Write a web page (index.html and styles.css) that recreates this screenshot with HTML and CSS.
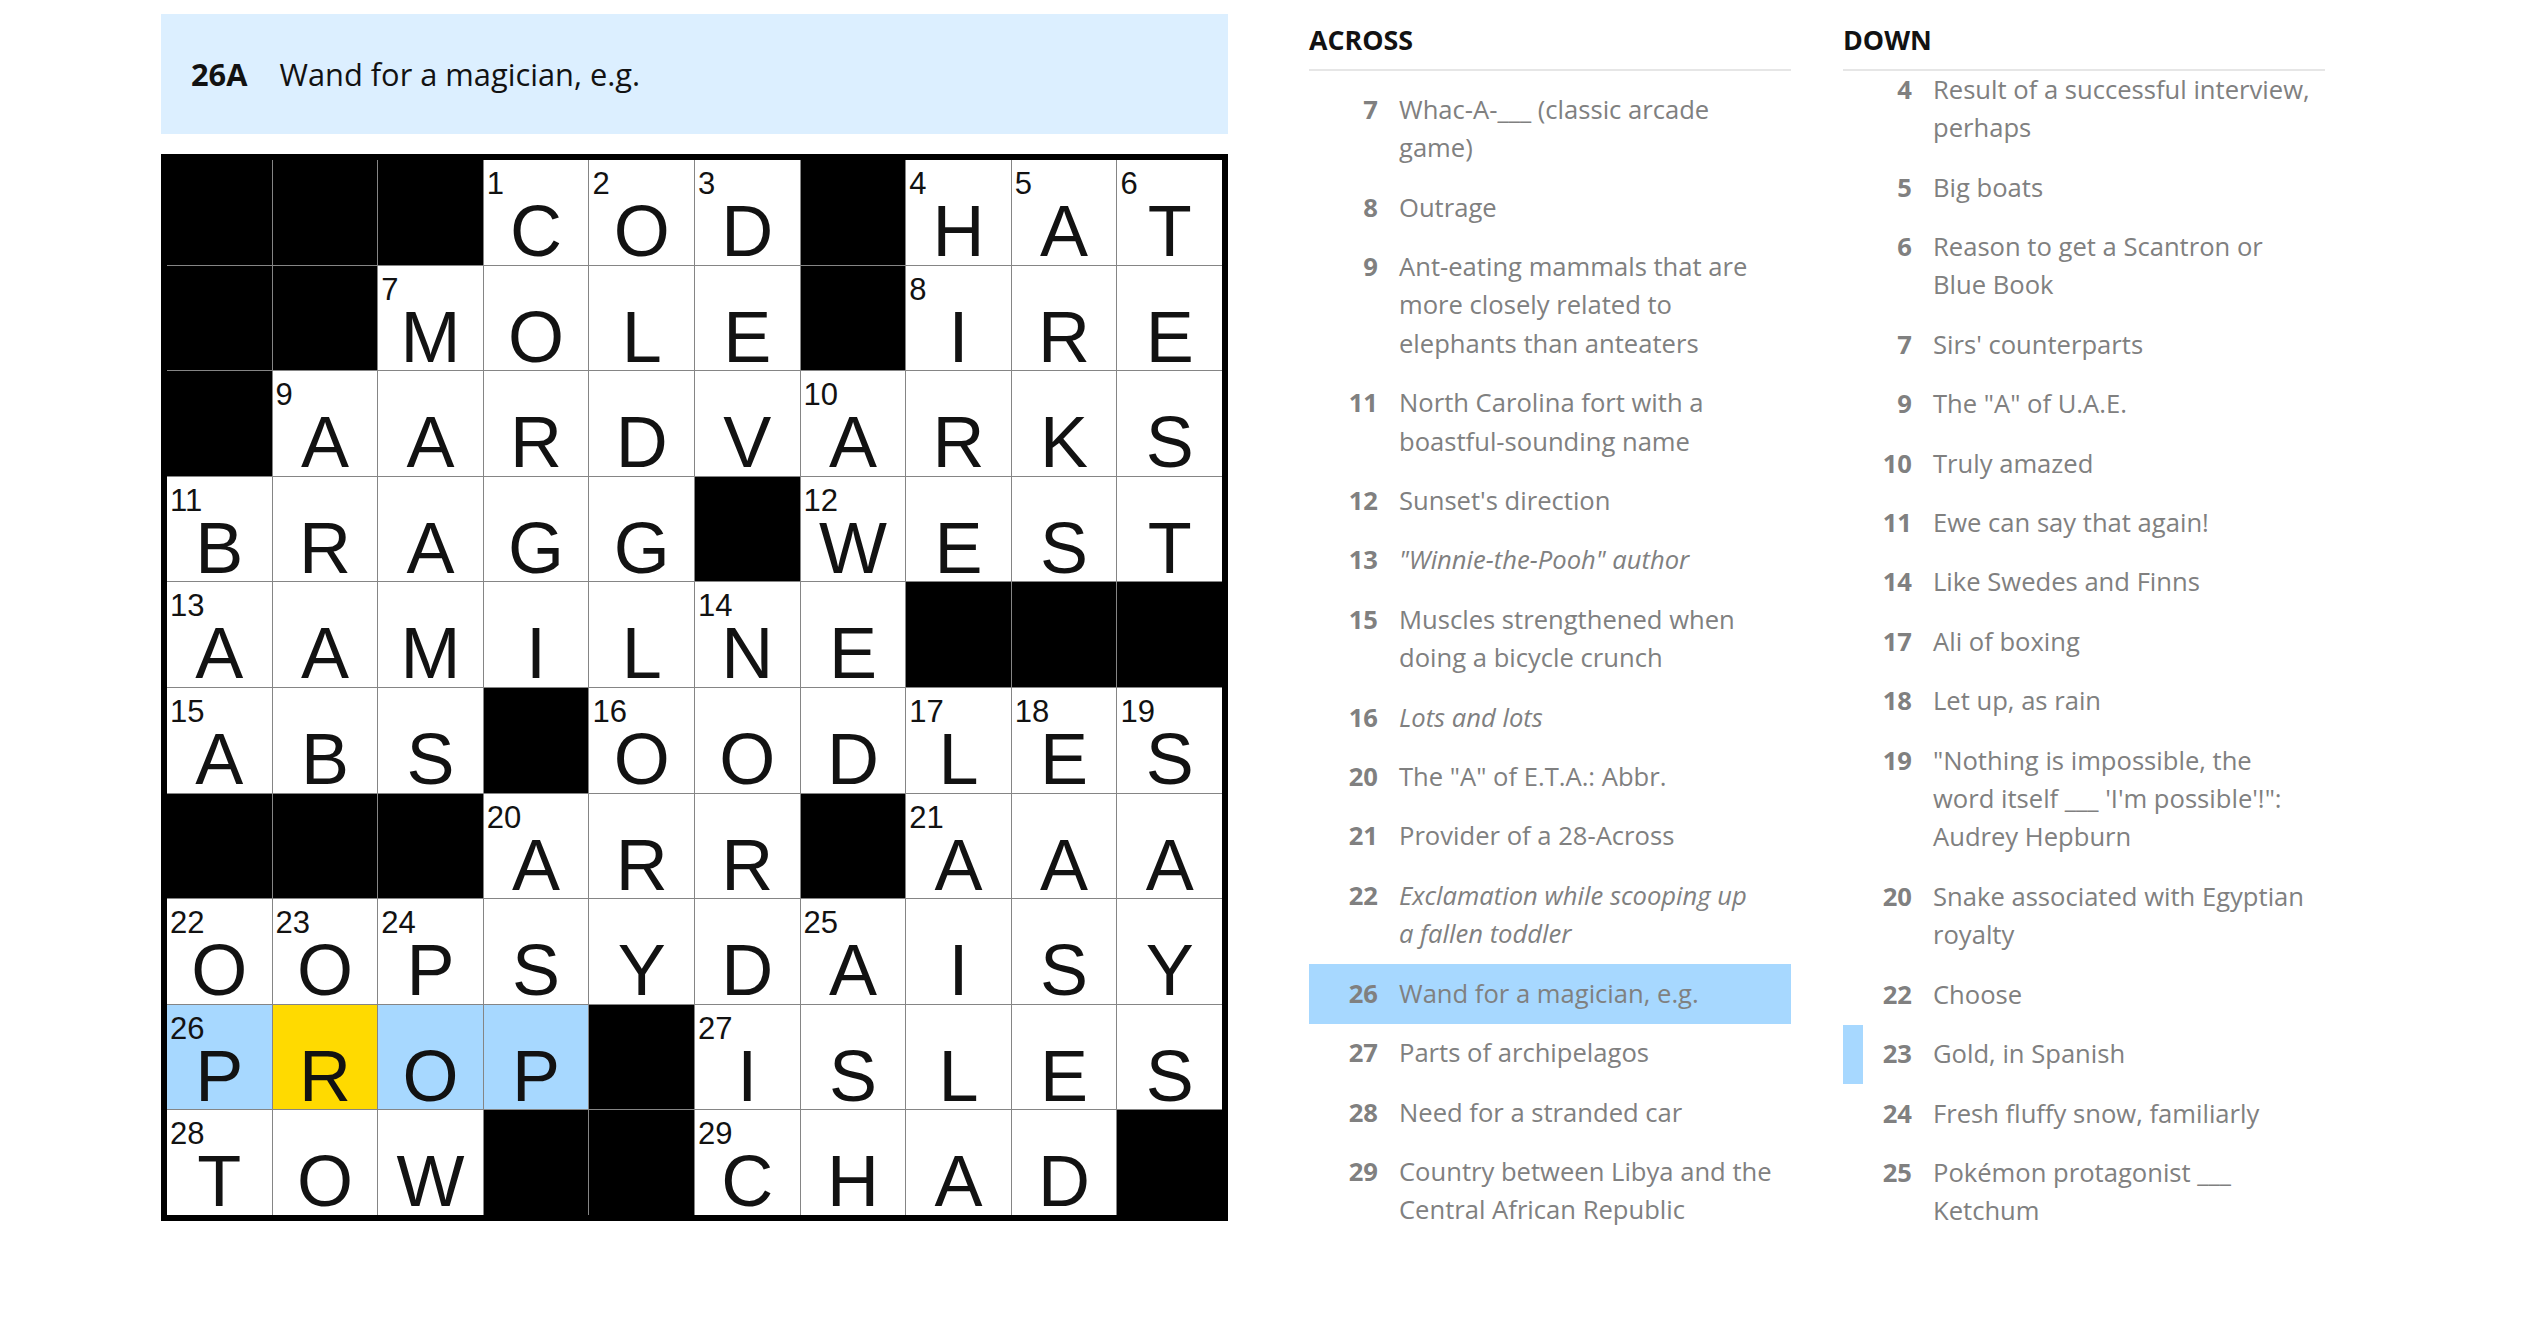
FILE: index.html
```html
<!DOCTYPE html>
<html lang="en">
<head>
<meta charset="utf-8">
<title>Crossword</title>
<link rel="stylesheet" href="styles.css">
</head>
<body>
<div class="page">
  <div class="board">
    <div class="clue-bar">
      <span class="cb-num">26A</span>
      <span class="cb-text">Wand for a magician, e.g.</span>
    </div>
    <div class="grid">
      <div class="cell blk"></div><div class="cell blk"></div><div class="cell blk"></div><div class="cell"><span class="num">1</span><span class="ltr">C</span></div><div class="cell"><span class="num">2</span><span class="ltr">O</span></div><div class="cell"><span class="num">3</span><span class="ltr">D</span></div><div class="cell blk"></div><div class="cell"><span class="num">4</span><span class="ltr">H</span></div><div class="cell"><span class="num">5</span><span class="ltr">A</span></div><div class="cell"><span class="num">6</span><span class="ltr">T</span></div>

      <div class="cell blk"></div><div class="cell blk"></div><div class="cell"><span class="num">7</span><span class="ltr">M</span></div><div class="cell"><span class="ltr">O</span></div><div class="cell"><span class="ltr">L</span></div><div class="cell"><span class="ltr">E</span></div><div class="cell blk"></div><div class="cell"><span class="num">8</span><span class="ltr">I</span></div><div class="cell"><span class="ltr">R</span></div><div class="cell"><span class="ltr">E</span></div>

      <div class="cell blk"></div><div class="cell"><span class="num">9</span><span class="ltr">A</span></div><div class="cell"><span class="ltr">A</span></div><div class="cell"><span class="ltr">R</span></div><div class="cell"><span class="ltr">D</span></div><div class="cell"><span class="ltr">V</span></div><div class="cell"><span class="num">10</span><span class="ltr">A</span></div><div class="cell"><span class="ltr">R</span></div><div class="cell"><span class="ltr">K</span></div><div class="cell"><span class="ltr">S</span></div>

      <div class="cell"><span class="num">11</span><span class="ltr">B</span></div><div class="cell"><span class="ltr">R</span></div><div class="cell"><span class="ltr">A</span></div><div class="cell"><span class="ltr">G</span></div><div class="cell"><span class="ltr">G</span></div><div class="cell blk"></div><div class="cell"><span class="num">12</span><span class="ltr">W</span></div><div class="cell"><span class="ltr">E</span></div><div class="cell"><span class="ltr">S</span></div><div class="cell"><span class="ltr">T</span></div>

      <div class="cell"><span class="num">13</span><span class="ltr">A</span></div><div class="cell"><span class="ltr">A</span></div><div class="cell"><span class="ltr">M</span></div><div class="cell"><span class="ltr">I</span></div><div class="cell"><span class="ltr">L</span></div><div class="cell"><span class="num">14</span><span class="ltr">N</span></div><div class="cell"><span class="ltr">E</span></div><div class="cell blk"></div><div class="cell blk"></div><div class="cell blk"></div>

      <div class="cell"><span class="num">15</span><span class="ltr">A</span></div><div class="cell"><span class="ltr">B</span></div><div class="cell"><span class="ltr">S</span></div><div class="cell blk"></div><div class="cell"><span class="num">16</span><span class="ltr">O</span></div><div class="cell"><span class="ltr">O</span></div><div class="cell"><span class="ltr">D</span></div><div class="cell"><span class="num">17</span><span class="ltr">L</span></div><div class="cell"><span class="num">18</span><span class="ltr">E</span></div><div class="cell"><span class="num">19</span><span class="ltr">S</span></div>

      <div class="cell blk"></div><div class="cell blk"></div><div class="cell blk"></div><div class="cell"><span class="num">20</span><span class="ltr">A</span></div><div class="cell"><span class="ltr">R</span></div><div class="cell"><span class="ltr">R</span></div><div class="cell blk"></div><div class="cell"><span class="num">21</span><span class="ltr">A</span></div><div class="cell"><span class="ltr">A</span></div><div class="cell"><span class="ltr">A</span></div>

      <div class="cell"><span class="num">22</span><span class="ltr">O</span></div><div class="cell"><span class="num">23</span><span class="ltr">O</span></div><div class="cell"><span class="num">24</span><span class="ltr">P</span></div><div class="cell"><span class="ltr">S</span></div><div class="cell"><span class="ltr">Y</span></div><div class="cell"><span class="ltr">D</span></div><div class="cell"><span class="num">25</span><span class="ltr">A</span></div><div class="cell"><span class="ltr">I</span></div><div class="cell"><span class="ltr">S</span></div><div class="cell"><span class="ltr">Y</span></div>

      <div class="cell word"><span class="num">26</span><span class="ltr">P</span></div><div class="cell current"><span class="ltr">R</span></div><div class="cell word"><span class="ltr">O</span></div><div class="cell word"><span class="ltr">P</span></div><div class="cell blk"></div><div class="cell"><span class="num">27</span><span class="ltr">I</span></div><div class="cell"><span class="ltr">S</span></div><div class="cell"><span class="ltr">L</span></div><div class="cell"><span class="ltr">E</span></div><div class="cell"><span class="ltr">S</span></div>

      <div class="cell"><span class="num">28</span><span class="ltr">T</span></div><div class="cell"><span class="ltr">O</span></div><div class="cell"><span class="ltr">W</span></div><div class="cell blk"></div><div class="cell blk"></div><div class="cell"><span class="num">29</span><span class="ltr">C</span></div><div class="cell"><span class="ltr">H</span></div><div class="cell"><span class="ltr">A</span></div><div class="cell"><span class="ltr">D</span></div><div class="cell blk"></div>
    </div>
  </div>

  <section class="clues across">
    <h3 class="clues-title">ACROSS</h3>
    <div class="list-wrap">
      <ol class="clue-list">
        <li class="clue"><span class="clue-num">7</span><span class="clue-text">Whac-A-___ (classic arcade<br>game)</span></li>
        <li class="clue"><span class="clue-num">8</span><span class="clue-text">Outrage</span></li>
        <li class="clue"><span class="clue-num">9</span><span class="clue-text">Ant-eating mammals that are<br>more closely related to<br>elephants than anteaters</span></li>
        <li class="clue"><span class="clue-num">11</span><span class="clue-text">North Carolina fort with a<br>boastful-sounding name</span></li>
        <li class="clue"><span class="clue-num">12</span><span class="clue-text">Sunset's direction</span></li>
        <li class="clue"><span class="clue-num">13</span><span class="clue-text"><em>"Winnie-the-Pooh" author</em></span></li>
        <li class="clue"><span class="clue-num">15</span><span class="clue-text">Muscles strengthened when<br>doing a bicycle crunch</span></li>
        <li class="clue"><span class="clue-num">16</span><span class="clue-text"><em>Lots and lots</em></span></li>
        <li class="clue"><span class="clue-num">20</span><span class="clue-text">The "A" of E.T.A.: Abbr.</span></li>
        <li class="clue"><span class="clue-num">21</span><span class="clue-text">Provider of a 28-Across</span></li>
        <li class="clue"><span class="clue-num">22</span><span class="clue-text"><em>Exclamation while scooping up<br>a fallen toddler</em></span></li>
        <li class="clue selected"><span class="clue-num">26</span><span class="clue-text">Wand for a magician, e.g.</span></li>
        <li class="clue"><span class="clue-num">27</span><span class="clue-text">Parts of archipelagos</span></li>
        <li class="clue"><span class="clue-num">28</span><span class="clue-text">Need for a stranded car</span></li>
        <li class="clue"><span class="clue-num">29</span><span class="clue-text">Country between Libya and the<br>Central African Republic</span></li>
      </ol>
    </div>
  </section>

  <section class="clues down">
    <h3 class="clues-title">DOWN</h3>
    <div class="list-wrap">
      <ol class="clue-list scrolled">
        <li class="clue"><span class="clue-num">4</span><span class="clue-text">Result of a successful interview,<br>perhaps</span></li>
        <li class="clue"><span class="clue-num">5</span><span class="clue-text">Big boats</span></li>
        <li class="clue"><span class="clue-num">6</span><span class="clue-text">Reason to get a Scantron or<br>Blue Book</span></li>
        <li class="clue"><span class="clue-num">7</span><span class="clue-text">Sirs' counterparts</span></li>
        <li class="clue"><span class="clue-num">9</span><span class="clue-text">The "A" of U.A.E.</span></li>
        <li class="clue"><span class="clue-num">10</span><span class="clue-text">Truly amazed</span></li>
        <li class="clue"><span class="clue-num">11</span><span class="clue-text">Ewe can say that again!</span></li>
        <li class="clue"><span class="clue-num">14</span><span class="clue-text">Like Swedes and Finns</span></li>
        <li class="clue"><span class="clue-num">17</span><span class="clue-text">Ali of boxing</span></li>
        <li class="clue"><span class="clue-num">18</span><span class="clue-text">Let up, as rain</span></li>
        <li class="clue"><span class="clue-num">19</span><span class="clue-text">"Nothing is impossible, the<br>word itself ___ 'I'm possible'!":<br>Audrey Hepburn</span></li>
        <li class="clue"><span class="clue-num">20</span><span class="clue-text">Snake associated with Egyptian<br>royalty</span></li>
        <li class="clue"><span class="clue-num">22</span><span class="clue-text">Choose</span></li>
        <li class="clue related"><span class="clue-num">23</span><span class="clue-text">Gold, in Spanish</span></li>
        <li class="clue"><span class="clue-num">24</span><span class="clue-text">Fresh fluffy snow, familiarly</span></li>
        <li class="clue"><span class="clue-num">25</span><span class="clue-text">Pokémon protagonist ___<br>Ketchum</span></li>
      </ol>
    </div>
  </section>
</div>
</body>
</html>
```

FILE: styles.css
```css
* { box-sizing: border-box; }
html, body { margin: 0; padding: 0; background: #fff; }
body {
  font-family: "Open Sans", "Liberation Sans", sans-serif;
  color: #121212;
  width: 2530px;
  height: 1328px;
  overflow: hidden;
}
.page {
  display: flex;
  align-items: flex-start;
  padding-left: 161px;
}
.board {
  width: 1067px;
  padding-top: 14px;
  flex: none;
}
.clue-bar {
  height: 120px;
  background: #dcefff;
  display: flex;
  align-items: center;
  padding-left: 30px;
  font-size: 30.8px;
  margin-bottom: 20px;
}
.cb-num { font-weight: 700; margin-right: 32px; }
.cb-text { font-weight: 400; }

.grid {
  width: 1067px;
  height: 1067px;
  border: 6px solid #000;
  background: #858585;
  display: grid;
  grid-template-columns: repeat(10, 1fr);
  grid-template-rows: repeat(10, 1fr);
  gap: 1px;
  font-family: "Liberation Sans", Arial, sans-serif;
}
.cell {
  position: relative;
  background: #fff;
  display: flex;
  align-items: flex-end;
  justify-content: center;
  padding-bottom: 8.5px;
}
.cell.blk { background: #000; }
.cell.word { background: #a7d8ff; }
.cell.current { background: #ffda00; }
.num {
  position: absolute;
  left: 3px;
  top: 8px;
  font-size: 31px;
  line-height: 31px;
}
.ltr {
  font-size: 72px;
  line-height: 50px;
}

.clues {
  width: 482px;
  flex: none;
}
.clues.across { margin-left: 81px; }
.clues.down { margin-left: 52px; }
.clues-title {
  margin: 0;
  font-size: 26.8px;
  line-height: 26.8px;
  font-weight: 700;
  padding-top: 27.3px;
  padding-bottom: 15.4px;
  border-bottom: 2px solid #e6e6e6;
  color: #121212;
}
.list-wrap {
  height: 1180px;
  overflow: hidden;
}
.clue-list {
  list-style: none;
  margin: 0;
  padding: 8.8px 0 0 0;
}
.clue-list.scrolled {
  padding-top: 0;
  margin-top: -11.2px;
}
.clue {
  display: flex;
  align-items: flex-start;
  padding: 10.5px 0;
  border-left: 20px solid transparent;
  font-size: 25.6px;
  line-height: 38.4px;
  color: #808080;
}
.clue.selected { background: #a7d8ff; }
.clue.related { border-left-color: #a7d8ff; }
.clue-num {
  flex: none;
  width: 49px;
  text-align: right;
  font-weight: 700;
  margin-right: 21px;
}
.clue-text { flex: 1; white-space: nowrap; }
.clue-text em { font-style: italic; }
```
